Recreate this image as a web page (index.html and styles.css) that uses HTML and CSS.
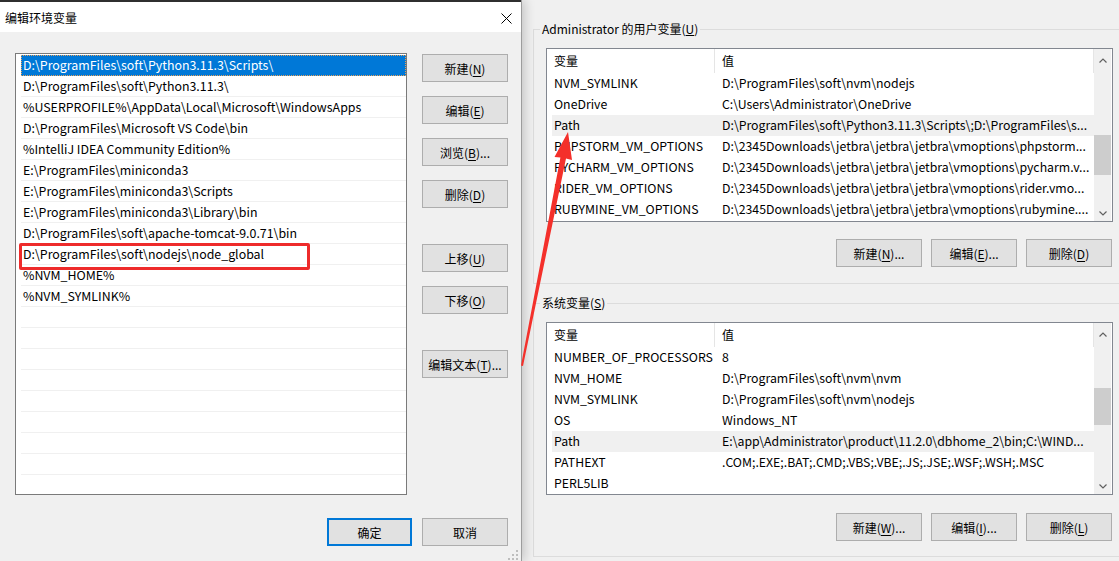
FILE: index.html
```html
<!DOCTYPE html>
<html lang="zh-CN">
<head>
    <meta charset="UTF-8">
    <meta name="viewport" content="width=device-width, initial-scale=1.0">
    <title>编辑环境变量</title>
    <link rel="stylesheet" href="styles.css">
</head>
<body>
    <div class="screen">
        <div class="dialog">
            <div class="titlebar">
                <span class="title">编辑环境变量</span>
                <svg class="close" width="11" height="11" viewBox="0 0 11 11">
                    <path d="M0.5 0.5 L10.5 10.5 M10.5 0.5 L0.5 10.5" stroke="#000" stroke-width="1" fill="none"/>
                </svg>
            </div>
            <div class="dialog-body">
                <div class="main-row">
                    <div class="pathlist">
                        <div class="path-item selected">D:\ProgramFiles\soft\Python3.11.3\Scripts\</div>
                        <div class="path-item">D:\ProgramFiles\soft\Python3.11.3\</div>
                        <div class="path-item">%USERPROFILE%\AppData\Local\Microsoft\WindowsApps</div>
                        <div class="path-item">D:\ProgramFiles\Microsoft VS Code\bin</div>
                        <div class="path-item">%IntelliJ IDEA Community Edition%</div>
                        <div class="path-item">E:\ProgramFiles\miniconda3</div>
                        <div class="path-item">E:\ProgramFiles\miniconda3\Scripts</div>
                        <div class="path-item">E:\ProgramFiles\miniconda3\Library\bin</div>
                        <div class="path-item">D:\ProgramFiles\soft\apache-tomcat-9.0.71\bin</div>
                        <div class="path-item">D:\ProgramFiles\soft\nodejs\node_global</div>
                        <div class="path-item">%NVM_HOME%</div>
                        <div class="path-item">%NVM_SYMLINK%</div>
                        <div class="path-item"></div>
                        <div class="path-item"></div>
                        <div class="path-item"></div>
                        <div class="path-item"></div>
                        <div class="path-item"></div>
                        <div class="path-item"></div>
                        <div class="path-item"></div>
                        <div class="path-item"></div>
                        <div class="path-item"></div>
                        <div class="red-box"></div>
                    </div>
                    <div class="side-buttons">
                        <button class="btn">新建(<u>N</u>)</button>
                        <button class="btn">编辑(<u>E</u>)</button>
                        <button class="btn">浏览(<u>B</u>)...</button>
                        <button class="btn">删除(<u>D</u>)</button>
                        <button class="btn gap-before">上移(<u>U</u>)</button>
                        <button class="btn">下移(<u>O</u>)</button>
                        <button class="btn gap-before">编辑文本(<u>T</u>)...</button>
                    </div>
                </div>
                <div class="footer">
                    <button class="btn btn-default">确定</button>
                    <button class="btn">取消</button>
                </div>
            </div>
            <svg class="grip" width="12" height="10" viewBox="0 0 12 10">
                <rect x="10" y="0" width="2" height="2" fill="#bdbdbd"/>
                <rect x="10" y="4" width="2" height="2" fill="#bdbdbd"/>
                <rect x="6" y="4" width="2" height="2" fill="#bdbdbd"/>
                <rect x="10" y="8" width="2" height="2" fill="#bdbdbd"/>
                <rect x="6" y="8" width="2" height="2" fill="#bdbdbd"/>
                <rect x="2" y="8" width="2" height="2" fill="#bdbdbd"/>
            </svg>
        </div>

        <div class="envwindow">
            <fieldset class="group group-user">
                <legend>Administrator 的用户变量(<u>U</u>)</legend>
                <div class="listview">
                    <div class="lv-content">
                        <div class="lv-head"><span class="col-name">变量</span><span class="col-value">值</span></div>
                        <div class="lv-row"><span class="col-name">NVM_SYMLINK</span><span class="col-value">D:\ProgramFiles\soft\nvm\nodejs</span></div>
                        <div class="lv-row"><span class="col-name">OneDrive</span><span class="col-value">C:\Users\Administrator\OneDrive</span></div>
                        <div class="lv-row active"><span class="col-name">Path</span><span class="col-value">D:\ProgramFiles\soft\Python3.11.3\Scripts\;D:\ProgramFiles\s...</span></div>
                        <div class="lv-row"><span class="col-name">PHPSTORM_VM_OPTIONS</span><span class="col-value">D:\2345Downloads\jetbra\jetbra\jetbra\vmoptions\phpstorm...</span></div>
                        <div class="lv-row"><span class="col-name">PYCHARM_VM_OPTIONS</span><span class="col-value">D:\2345Downloads\jetbra\jetbra\jetbra\vmoptions\pycharm.v...</span></div>
                        <div class="lv-row"><span class="col-name">RIDER_VM_OPTIONS</span><span class="col-value">D:\2345Downloads\jetbra\jetbra\jetbra\vmoptions\rider.vmo...</span></div>
                        <div class="lv-row"><span class="col-name">RUBYMINE_VM_OPTIONS</span><span class="col-value">D:\2345Downloads\jetbra\jetbra\jetbra\vmoptions\rubymine....</span></div>
                    </div>
                    <div class="vscroll">
                        <span class="sb-arrow sb-up">
                            <svg width="8" height="5" viewBox="0 0 8 5"><polyline points="0.5,4.5 4,1 7.5,4.5" fill="none" stroke="#606060" stroke-width="1.2"/></svg>
                        </span>
                        <span class="sb-track"><span class="sb-thumb thumb-user"></span></span>
                        <span class="sb-arrow sb-down">
                            <svg width="8" height="5" viewBox="0 0 8 5"><polyline points="0.5,0.5 4,4 7.5,0.5" fill="none" stroke="#606060" stroke-width="1.2"/></svg>
                        </span>
                    </div>
                </div>
                <div class="group-buttons">
                    <button class="btn">新建(<u>N</u>)...</button>
                    <button class="btn">编辑(<u>E</u>)...</button>
                    <button class="btn">删除(<u>D</u>)</button>
                </div>
            </fieldset>

            <fieldset class="group group-system">
                <legend>系统变量(<u>S</u>)</legend>
                <div class="listview">
                    <div class="lv-content">
                        <div class="lv-head"><span class="col-name">变量</span><span class="col-value">值</span></div>
                        <div class="lv-row"><span class="col-name">NUMBER_OF_PROCESSORS</span><span class="col-value">8</span></div>
                        <div class="lv-row"><span class="col-name">NVM_HOME</span><span class="col-value">D:\ProgramFiles\soft\nvm\nvm</span></div>
                        <div class="lv-row"><span class="col-name">NVM_SYMLINK</span><span class="col-value">D:\ProgramFiles\soft\nvm\nodejs</span></div>
                        <div class="lv-row"><span class="col-name">OS</span><span class="col-value">Windows_NT</span></div>
                        <div class="lv-row active"><span class="col-name">Path</span><span class="col-value">E:\app\Administrator\product\11.2.0\dbhome_2\bin;C:\WIND...</span></div>
                        <div class="lv-row"><span class="col-name">PATHEXT</span><span class="col-value">.COM;.EXE;.BAT;.CMD;.VBS;.VBE;.JS;.JSE;.WSF;.WSH;.MSC</span></div>
                        <div class="lv-row"><span class="col-name">PERL5LIB</span><span class="col-value"></span></div>
                    </div>
                    <div class="vscroll">
                        <span class="sb-arrow sb-up">
                            <svg width="8" height="5" viewBox="0 0 8 5"><polyline points="0.5,4.5 4,1 7.5,4.5" fill="none" stroke="#606060" stroke-width="1.2"/></svg>
                        </span>
                        <span class="sb-track"><span class="sb-thumb thumb-system"></span></span>
                        <span class="sb-arrow sb-down">
                            <svg width="8" height="5" viewBox="0 0 8 5"><polyline points="0.5,0.5 4,4 7.5,0.5" fill="none" stroke="#606060" stroke-width="1.2"/></svg>
                        </span>
                    </div>
                </div>
                <div class="group-buttons">
                    <button class="btn">新建(<u>W</u>)...</button>
                    <button class="btn">编辑(<u>I</u>)...</button>
                    <button class="btn">删除(<u>L</u>)</button>
                </div>
            </fieldset>
        </div>

        <!-- 标注箭头 -->
        <svg class="annotation" width="1119" height="561" viewBox="0 0 1119 561">
            <polygon points="568,132 572,160 566,158.5 523,366 521,365.6 560.4,157.5 554.5,157" fill="#f4302b"/>
        </svg>
    </div>
</body>
</html>
```

FILE: styles.css
```css
* {
    box-sizing: border-box;
}
html, body {
    margin: 0;
    padding: 0;
}
body {
    width: 1119px;
    height: 561px;
    overflow: hidden;
    background-color: #f0f0f0;
    font-family: "Noto Sans CJK SC", sans-serif;
    font-size: 12px;
    color: #000;
}
.screen {
    position: relative;
    display: flex;
    width: 1119px;
    height: 561px;
    overflow: hidden;
}

/* 左侧对话框 */
.dialog {
    position: relative;
    z-index: 2;
    flex: none;
    width: 522px;
    height: 561px;
    background-color: #f0f0f0;
    border-right: 1px solid #9c9c9c;
    box-shadow: 3px 0 10px rgba(0,0,0,0.18);
}
.titlebar {
    display: flex;
    align-items: center;
    justify-content: space-between;
    height: 32px;
    padding: 0 9px 0 5px;
    background-color: white;
    border-top: 2px solid #2f2f2f;
}
.title {
    font-size: 12px;
    line-height: 16px;
    margin-top: 2px;
}
.close {
    display: block;
    margin-top: 2px;
}
.dialog-body {
    padding: 21px 13px 0 15px;
}
.main-row {
    display: flex;
    gap: 15px;
}
.pathlist {
    position: relative;
    width: 392px;
    height: 442px;
    padding: 1px 0 0 5px;
    background-color: white;
    border: 1px solid #7a7a7a;
    overflow: hidden;
}
.path-item {
    height: 21px;
    line-height: 20px;
    padding-left: 2px;
    font-size: 12.4px;
    border-bottom: 1px solid #f0f0f0;
    white-space: nowrap;
}
.path-item.selected {
    background-color: #0078d7;
    color: white;
    border-bottom-color: #0078d7;
    outline: 1px dotted #e8a25a;
    outline-offset: -1px;
}
.red-box {
    position: absolute;
    left: 3px;
    top: 189px;
    width: 291px;
    height: 27px;
    border: 3px solid #ee2b2b;
    border-radius: 2px;
}
.side-buttons {
    display: flex;
    flex-direction: column;
    gap: 14px;
    padding-top: 1px;
}
.btn {
    width: 86px;
    height: 28px;
    padding: 0;
    font-family: "Noto Sans CJK SC", sans-serif;
    font-size: 12px;
    color: #000;
    background-color: #e1e1e1;
    border: 1px solid #adadad;
    border-radius: 0;
}
.btn u {
    text-underline-offset: 2px;
}
.side-buttons .gap-before {
    margin-top: 22px;
}
.footer {
    display: flex;
    justify-content: flex-end;
    gap: 10px;
    margin-top: 23px;
}
.btn-default {
    width: 85px;
    border: 2px solid #0078d7;
}
.grip {
    position: absolute;
    right: 3px;
    bottom: 1px;
}

/* 右侧环境变量窗口 */
.envwindow {
    flex: none;
    width: 612px;
    padding: 20px 0 0 11px;
}
.group {
    margin: 0;
    padding: 0 20px 0 6px;
    border: 1px solid #dcdcdc;
    min-inline-size: 0;
}
.group legend {
    padding: 0 2px;
    margin-left: 0;
    line-height: 18px;
}
.group-user {
    padding-bottom: 16px;
}
.group-system {
    margin-top: 10px;
    padding-bottom: 15px;
}
.listview {
    display: flex;
    width: 567px;
    height: 174px;
    margin: 10px 0 0 6px;
    background-color: white;
    border: 1px solid #828790;
}
.group-system .listview {
    height: 173px;
}
.lv-content {
    flex: 1;
    min-width: 0;
    padding-left: 5px;
}
.lv-head {
    display: flex;
    height: 24px;
    line-height: 24px;
}
.lv-head .col-name {
    border-right: 1px solid #e5e5e5;
}
.lv-head .col-value {
    border-right: 1px solid #e5e5e5;
}
.lv-row {
    display: flex;
    height: 21px;
    line-height: 21px;
    font-size: 12.3px;
}
.lv-row.active {
    background-color: #f0f0f0;
}
.col-name {
    flex: none;
    width: 163px;
    padding-left: 2px;
    white-space: nowrap;
    overflow: hidden;
}
.col-value {
    flex: 1;
    min-width: 0;
    padding-left: 7px;
    white-space: nowrap;
    overflow: hidden;
    text-overflow: ellipsis;
}
.vscroll {
    display: flex;
    flex-direction: column;
    flex: none;
    width: 17px;
    margin-right: 1px;
    background-color: #f0f0f0;
}
.sb-arrow {
    display: flex;
    align-items: center;
    justify-content: center;
}
.sb-up {
    height: 22px;
}
.sb-down {
    height: 16px;
}
.sb-track {
    flex: 1;
}
.sb-thumb {
    display: block;
    background-color: #cdcdcd;
}
.thumb-user {
    margin-top: 64px;
    height: 40px;
}
.thumb-system {
    margin-top: 43px;
    height: 37px;
}
.group-buttons {
    display: flex;
    justify-content: flex-end;
    gap: 9px;
    width: 566px;
    margin: 17px 0 0 6px;
}
.group-system .group-buttons {
    margin-top: 18px;
}

.annotation {
    position: absolute;
    left: 0;
    top: 0;
    z-index: 5;
    pointer-events: none;
}
```
